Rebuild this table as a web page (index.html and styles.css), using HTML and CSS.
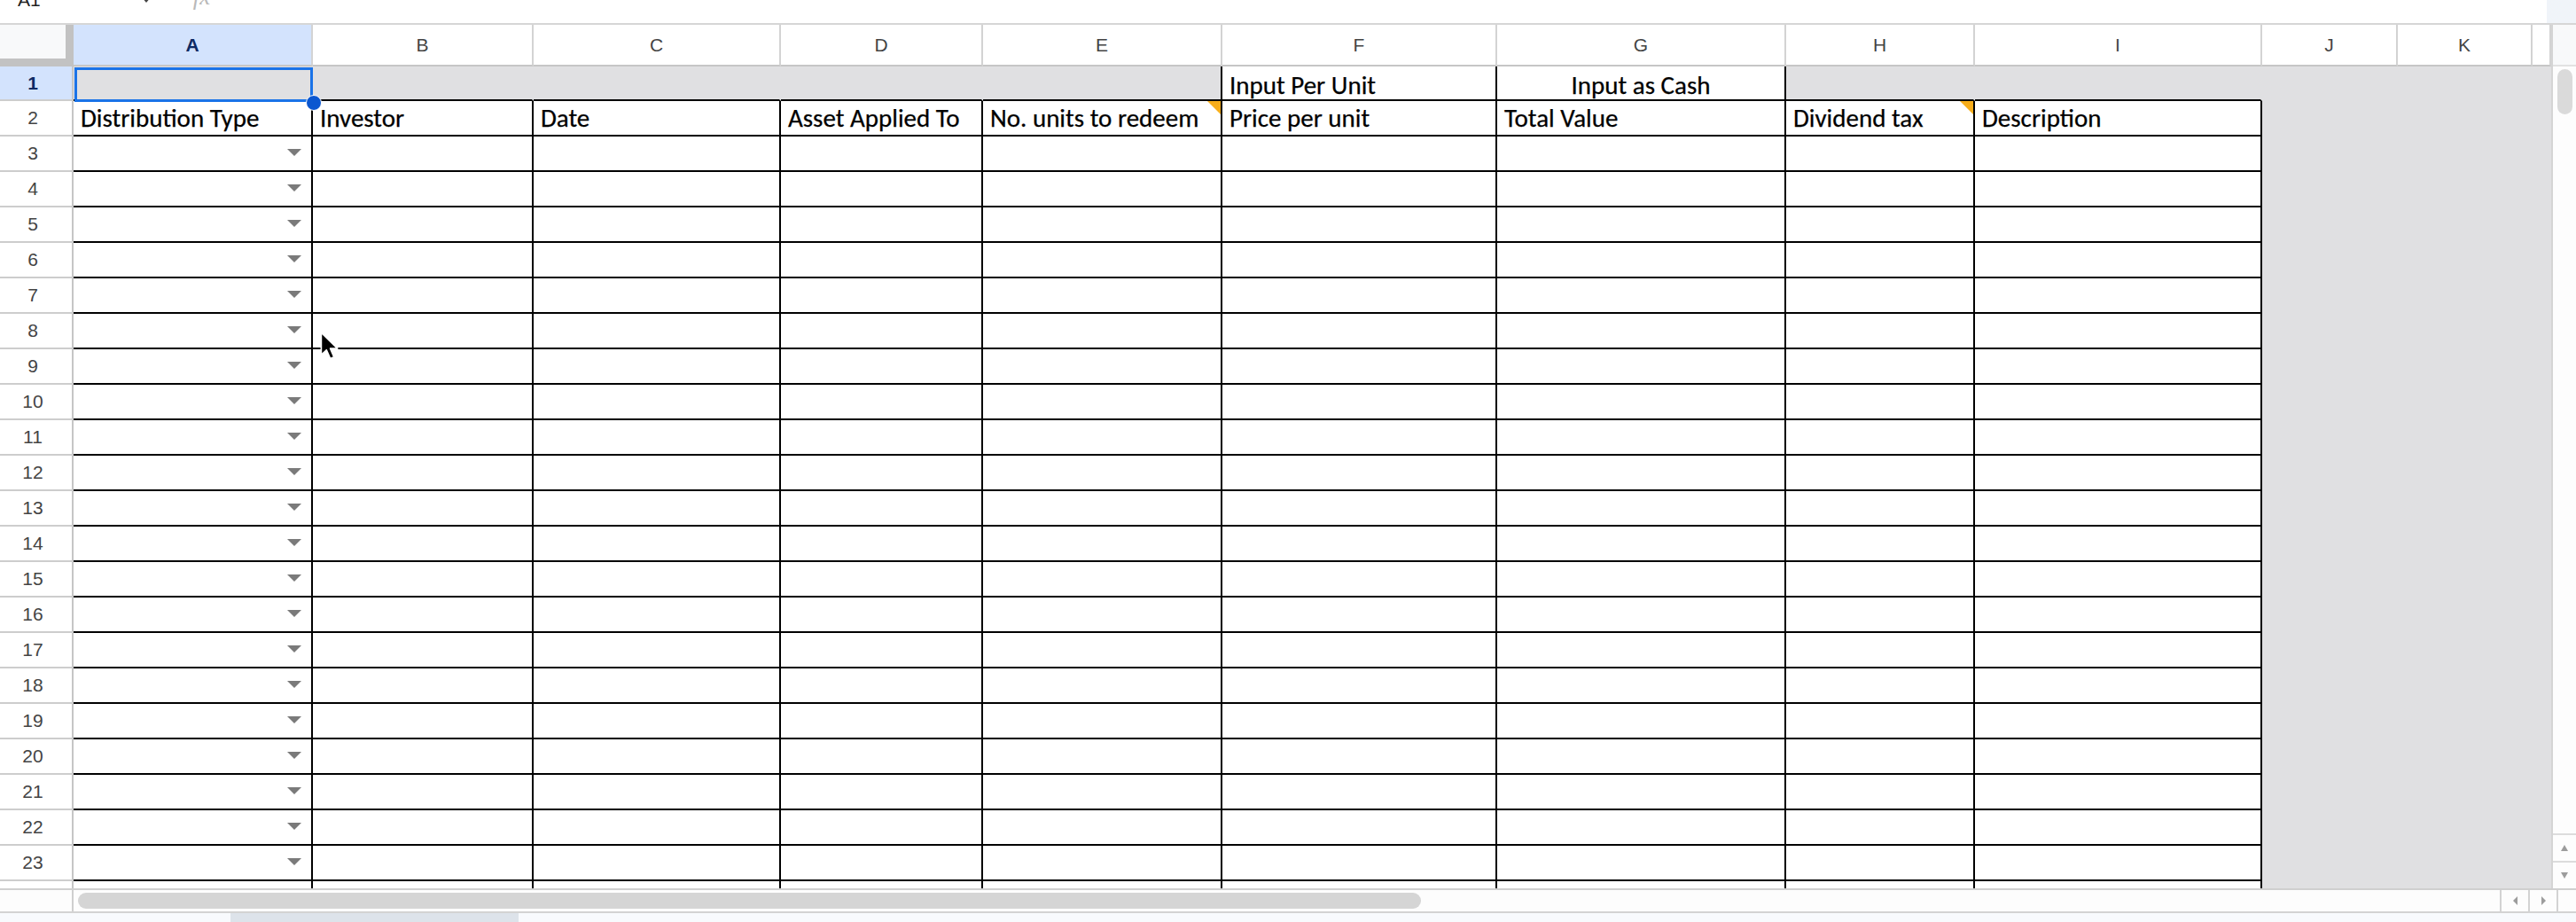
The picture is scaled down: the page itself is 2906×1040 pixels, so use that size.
FILE: index.html
```html
<!DOCTYPE html>
<html lang="en">
<head>
<meta charset="utf-8">
<title>Sheet</title>
<link rel="stylesheet" href="styles.css">
</head>
<body>
<div class="app">
  <div class="fbar">
    <span class="namebox">A1</span>
    <span class="nb-caret"></span>
    <span class="fx">fx</span>
    <span class="fbar-fill"></span>
    <span class="fbar-corner"></span>
  </div>

  <div class="main">
    <div class="grid">
      <div class="row hdr">
        <div class="corner"></div>
        <div class="ch wa sel">A</div>
        <div class="ch wb">B</div>
        <div class="ch wc">C</div>
        <div class="ch wd">D</div>
        <div class="ch we">E</div>
        <div class="ch wf">F</div>
        <div class="ch wg">G</div>
        <div class="ch wh">H</div>
        <div class="ch wi">I</div>
        <div class="ch wj">J</div>
        <div class="ch wk">K</div>
        <div class="ch wl"></div>
      </div>

      <div class="row r1">
        <div class="rh sel">1</div>
        <div class="c wa gray a1"></div>
        <div class="c wb gray"></div>
        <div class="c wc gray"></div>
        <div class="c wd gray"></div>
        <div class="c we gray vr"></div>
        <div class="c wf t t1">Input Per Unit</div>
        <div class="c wg t t1 center">Input as Cash</div>
        <div class="c wh gray"></div>
        <div class="c wi gray"></div>
        <div class="c wj out"></div>
        <div class="c wk out"></div>
        <div class="c wl out"></div>
      </div>

      <div class="row">
        <div class="rh">2</div>
        <div class="c wa t">Distribution Type</div>
        <div class="c wb t">Investor</div>
        <div class="c wc t">Date</div>
        <div class="c wd t">Asset Applied To</div>
        <div class="c we t note">No. units to redeem</div>
        <div class="c wf t">Price per unit</div>
        <div class="c wg t">Total Value</div>
        <div class="c wh t note">Dividend tax</div>
        <div class="c wi t">Description</div>
        <div class="c wj out"></div>
        <div class="c wk out"></div>
        <div class="c wl out"></div>
      </div>

      <div class="row"><div class="rh">3</div><div class="c wa dd"><i class="arrow"></i></div><div class="c wb"></div><div class="c wc"></div><div class="c wd"></div><div class="c we"></div><div class="c wf"></div><div class="c wg"></div><div class="c wh"></div><div class="c wi"></div><div class="c wj out"></div><div class="c wk out"></div><div class="c wl out"></div></div>
      <div class="row"><div class="rh">4</div><div class="c wa dd"><i class="arrow"></i></div><div class="c wb"></div><div class="c wc"></div><div class="c wd"></div><div class="c we"></div><div class="c wf"></div><div class="c wg"></div><div class="c wh"></div><div class="c wi"></div><div class="c wj out"></div><div class="c wk out"></div><div class="c wl out"></div></div>
      <div class="row"><div class="rh">5</div><div class="c wa dd"><i class="arrow"></i></div><div class="c wb"></div><div class="c wc"></div><div class="c wd"></div><div class="c we"></div><div class="c wf"></div><div class="c wg"></div><div class="c wh"></div><div class="c wi"></div><div class="c wj out"></div><div class="c wk out"></div><div class="c wl out"></div></div>
      <div class="row"><div class="rh">6</div><div class="c wa dd"><i class="arrow"></i></div><div class="c wb"></div><div class="c wc"></div><div class="c wd"></div><div class="c we"></div><div class="c wf"></div><div class="c wg"></div><div class="c wh"></div><div class="c wi"></div><div class="c wj out"></div><div class="c wk out"></div><div class="c wl out"></div></div>
      <div class="row"><div class="rh">7</div><div class="c wa dd"><i class="arrow"></i></div><div class="c wb"></div><div class="c wc"></div><div class="c wd"></div><div class="c we"></div><div class="c wf"></div><div class="c wg"></div><div class="c wh"></div><div class="c wi"></div><div class="c wj out"></div><div class="c wk out"></div><div class="c wl out"></div></div>
      <div class="row"><div class="rh">8</div><div class="c wa dd"><i class="arrow"></i></div><div class="c wb"></div><div class="c wc"></div><div class="c wd"></div><div class="c we"></div><div class="c wf"></div><div class="c wg"></div><div class="c wh"></div><div class="c wi"></div><div class="c wj out"></div><div class="c wk out"></div><div class="c wl out"></div></div>
      <div class="row"><div class="rh">9</div><div class="c wa dd"><i class="arrow"></i></div><div class="c wb"></div><div class="c wc"></div><div class="c wd"></div><div class="c we"></div><div class="c wf"></div><div class="c wg"></div><div class="c wh"></div><div class="c wi"></div><div class="c wj out"></div><div class="c wk out"></div><div class="c wl out"></div></div>
      <div class="row"><div class="rh">10</div><div class="c wa dd"><i class="arrow"></i></div><div class="c wb"></div><div class="c wc"></div><div class="c wd"></div><div class="c we"></div><div class="c wf"></div><div class="c wg"></div><div class="c wh"></div><div class="c wi"></div><div class="c wj out"></div><div class="c wk out"></div><div class="c wl out"></div></div>
      <div class="row"><div class="rh">11</div><div class="c wa dd"><i class="arrow"></i></div><div class="c wb"></div><div class="c wc"></div><div class="c wd"></div><div class="c we"></div><div class="c wf"></div><div class="c wg"></div><div class="c wh"></div><div class="c wi"></div><div class="c wj out"></div><div class="c wk out"></div><div class="c wl out"></div></div>
      <div class="row"><div class="rh">12</div><div class="c wa dd"><i class="arrow"></i></div><div class="c wb"></div><div class="c wc"></div><div class="c wd"></div><div class="c we"></div><div class="c wf"></div><div class="c wg"></div><div class="c wh"></div><div class="c wi"></div><div class="c wj out"></div><div class="c wk out"></div><div class="c wl out"></div></div>
      <div class="row"><div class="rh">13</div><div class="c wa dd"><i class="arrow"></i></div><div class="c wb"></div><div class="c wc"></div><div class="c wd"></div><div class="c we"></div><div class="c wf"></div><div class="c wg"></div><div class="c wh"></div><div class="c wi"></div><div class="c wj out"></div><div class="c wk out"></div><div class="c wl out"></div></div>
      <div class="row"><div class="rh">14</div><div class="c wa dd"><i class="arrow"></i></div><div class="c wb"></div><div class="c wc"></div><div class="c wd"></div><div class="c we"></div><div class="c wf"></div><div class="c wg"></div><div class="c wh"></div><div class="c wi"></div><div class="c wj out"></div><div class="c wk out"></div><div class="c wl out"></div></div>
      <div class="row"><div class="rh">15</div><div class="c wa dd"><i class="arrow"></i></div><div class="c wb"></div><div class="c wc"></div><div class="c wd"></div><div class="c we"></div><div class="c wf"></div><div class="c wg"></div><div class="c wh"></div><div class="c wi"></div><div class="c wj out"></div><div class="c wk out"></div><div class="c wl out"></div></div>
      <div class="row"><div class="rh">16</div><div class="c wa dd"><i class="arrow"></i></div><div class="c wb"></div><div class="c wc"></div><div class="c wd"></div><div class="c we"></div><div class="c wf"></div><div class="c wg"></div><div class="c wh"></div><div class="c wi"></div><div class="c wj out"></div><div class="c wk out"></div><div class="c wl out"></div></div>
      <div class="row"><div class="rh">17</div><div class="c wa dd"><i class="arrow"></i></div><div class="c wb"></div><div class="c wc"></div><div class="c wd"></div><div class="c we"></div><div class="c wf"></div><div class="c wg"></div><div class="c wh"></div><div class="c wi"></div><div class="c wj out"></div><div class="c wk out"></div><div class="c wl out"></div></div>
      <div class="row"><div class="rh">18</div><div class="c wa dd"><i class="arrow"></i></div><div class="c wb"></div><div class="c wc"></div><div class="c wd"></div><div class="c we"></div><div class="c wf"></div><div class="c wg"></div><div class="c wh"></div><div class="c wi"></div><div class="c wj out"></div><div class="c wk out"></div><div class="c wl out"></div></div>
      <div class="row"><div class="rh">19</div><div class="c wa dd"><i class="arrow"></i></div><div class="c wb"></div><div class="c wc"></div><div class="c wd"></div><div class="c we"></div><div class="c wf"></div><div class="c wg"></div><div class="c wh"></div><div class="c wi"></div><div class="c wj out"></div><div class="c wk out"></div><div class="c wl out"></div></div>
      <div class="row"><div class="rh">20</div><div class="c wa dd"><i class="arrow"></i></div><div class="c wb"></div><div class="c wc"></div><div class="c wd"></div><div class="c we"></div><div class="c wf"></div><div class="c wg"></div><div class="c wh"></div><div class="c wi"></div><div class="c wj out"></div><div class="c wk out"></div><div class="c wl out"></div></div>
      <div class="row"><div class="rh">21</div><div class="c wa dd"><i class="arrow"></i></div><div class="c wb"></div><div class="c wc"></div><div class="c wd"></div><div class="c we"></div><div class="c wf"></div><div class="c wg"></div><div class="c wh"></div><div class="c wi"></div><div class="c wj out"></div><div class="c wk out"></div><div class="c wl out"></div></div>
      <div class="row"><div class="rh">22</div><div class="c wa dd"><i class="arrow"></i></div><div class="c wb"></div><div class="c wc"></div><div class="c wd"></div><div class="c we"></div><div class="c wf"></div><div class="c wg"></div><div class="c wh"></div><div class="c wi"></div><div class="c wj out"></div><div class="c wk out"></div><div class="c wl out"></div></div>
      <div class="row"><div class="rh">23</div><div class="c wa dd"><i class="arrow"></i></div><div class="c wb"></div><div class="c wc"></div><div class="c wd"></div><div class="c we"></div><div class="c wf"></div><div class="c wg"></div><div class="c wh"></div><div class="c wi"></div><div class="c wj out"></div><div class="c wk out"></div><div class="c wl out"></div></div>
      <div class="row cut"><div class="rh"></div><div class="c wa"></div><div class="c wb"></div><div class="c wc"></div><div class="c wd"></div><div class="c we"></div><div class="c wf"></div><div class="c wg"></div><div class="c wh"></div><div class="c wi"></div><div class="c wj out"></div><div class="c wk out"></div><div class="c wl out"></div></div>
    </div>

    <div class="vscroll">
      <div class="vs-top"></div>
      <div class="vs-track"><div class="vs-thumb"></div></div>
      <div class="vs-btn"><i class="tri up"></i></div>
      <div class="vs-btn"><i class="tri down"></i></div>
    </div>
  </div>

  <div class="hscroll">
    <div class="hs-left"></div>
    <div class="hs-track"><div class="hs-thumb"></div></div>
    <div class="hs-btn"><i class="tri left"></i></div>
    <div class="hs-btn"><i class="tri right"></i></div>
    <div class="hs-end"></div>
  </div>

  <div class="tabs">
    <div class="tab-active"></div>
  </div>

  <svg class="cursor" width="28" height="38" viewBox="0 0 26 36" aria-hidden="true">
    <path d="M2 2 L2 26 L7.6 20.6 L11.6 29.8 L15.6 28.1 L11.7 19 L19.4 19 Z" fill="#000" stroke="#fff" stroke-width="1.6" stroke-linejoin="round"/>
  </svg>
</div>
</body>
</html>
```

FILE: styles.css
```css
* { box-sizing: border-box; }

html, body {
  margin: 0;
  padding: 0;
}

body {
  width: 2906px;
  height: 1040px;
  overflow: hidden;
  background: #fff;
  font-family: "Liberation Sans", Arial, sans-serif;
}

.app {
  position: relative;
  width: 2906px;
  height: 1040px;
  display: flex;
  flex-direction: column;
}

/* ---------- formula bar (mostly scrolled out of view) ---------- */
.fbar {
  flex: none;
  height: 28px;
  display: flex;
  align-items: flex-start;
  overflow: hidden;
  border-bottom: 2px solid #d6d6d6;
}

.namebox {
  margin-left: 20px;
  margin-top: -12px;
  font-size: 21px;
  line-height: 24px;
  color: #1f1f1f;
}

.nb-caret {
  margin-left: 114px;
  margin-top: -3px;
  width: 0;
  height: 0;
  border-left: 5px solid transparent;
  border-right: 5px solid transparent;
  border-top: 6px solid #444;
}

.fx {
  margin-left: 48px;
  margin-top: -19px;
  font-family: "Liberation Serif", serif;
  font-style: italic;
  font-size: 27px;
  line-height: 30px;
  color: #b9b9b9;
}

.fbar-fill { flex: 1; }

.fbar-corner {
  width: 33px;
  height: 26px;
  background: #f0f4f9;
}

/* ---------- main grid ---------- */
.main {
  flex: none;
  height: 974px;
  display: flex;
}

.grid {
  width: 2878px;
  display: flex;
  flex-direction: column;
  overflow: hidden;
}

.row {
  flex: none;
  display: flex;
  height: 40px;
}

.row.hdr { height: 47px; }
.row.r1 { height: 39px; }
.row.cut { height: 8px; overflow: hidden; align-items: flex-start; }
.row.cut > div { height: 40px; }

/* column widths */
.corner, .rh { width: 83px; flex: none; }
.wa { width: 270px; flex: none; }
.wb { width: 249px; flex: none; }
.wc { width: 279px; flex: none; }
.wd { width: 228px; flex: none; }
.we { width: 270px; flex: none; }
.wf { width: 310px; flex: none; }
.wg { width: 326px; flex: none; }
.wh { width: 213px; flex: none; }
.wi { width: 324px; flex: none; }
.wj { width: 153px; flex: none; }
.wk { width: 152px; flex: none; }
.wl { width: 21px; flex: none; }

/* header corner */
.corner {
  background: #f8f9fa;
  border-right: 9px solid #c2c2c2;
  border-bottom: 9px solid #c2c2c2;
}

/* column headers */
.ch {
  display: flex;
  align-items: center;
  justify-content: center;
  background: #fff;
  border-right: 2px solid #d3d3d3;
  border-bottom: 2px solid #c6c6c6;
  font-size: 21px;
  color: #444;
  padding-top: 1px;
}

.ch.sel, .rh.sel {
  background: #d3e3fd;
  color: #0e2a63;
  font-weight: bold;
}

/* row headers */
.rh {
  display: flex;
  align-items: center;
  justify-content: center;
  padding-right: 7px;
  background: #fff;
  border-right: 2px solid #c6c6c6;
  border-bottom: 2px solid #cdcdcd;
  font-size: 21px;
  color: #444;
}

/* cells */
.c {
  position: relative;
  background: #fff;
  border-right: 2px solid #000;
  border-bottom: 2px solid #000;
}

.c.gray {
  background: #e0e0e2;
  border-right-color: #e0e0e2;
}

.c.gray.vr { border-right-color: #000; }

.c.out {
  background: #e0e0e2;
  border-right-color: #e0e0e2;
  border-bottom-color: #e0e0e2;
}

.t {
  display: flex;
  align-items: flex-end;
  padding: 0 0 4px 8px;
  font-family: Carlito, Lato, "Open Sans", sans-serif;
  font-size: 29px;
  line-height: 29px;
  color: #000;
  -webkit-text-stroke: 0.25px #000;
  white-space: nowrap;
  overflow: hidden;
}

.t.t1 { padding-bottom: 1px; }
.t.center { justify-content: center; padding-left: 0; }

/* selected cell A1 */
.a1::before {
  content: "";
  position: absolute;
  left: 1px;
  top: 1px;
  right: -2px;
  bottom: -3px;
  border: 3px solid #1a73e8;
  z-index: 2;
}

.a1::after {
  content: "";
  position: absolute;
  left: 262px;
  top: 32px;
  width: 16px;
  height: 16px;
  border-radius: 50%;
  background: #0b57d0;
  border: 1.5px solid #fff;
  z-index: 3;
}

/* note indicators */
.note::after {
  content: "";
  position: absolute;
  top: 0;
  right: 0;
  width: 15px;
  height: 15px;
  background: #f7ad1b;
  clip-path: polygon(0 0, 100% 0, 100% 100%);
}

/* dropdown chips */
.dd {
  display: flex;
  align-items: center;
  justify-content: flex-end;
  padding-right: 11px;
  padding-bottom: 3px;
}

.arrow {
  width: 0;
  height: 0;
  border-left: 8px solid transparent;
  border-right: 8px solid transparent;
  border-top: 8px solid #7a7a7a;
}

/* ---------- vertical scrollbar ---------- */
.vscroll {
  width: 28px;
  flex: none;
  display: flex;
  flex-direction: column;
  border-left: 2px solid #d4d4d4;
}

.vs-top {
  height: 47px;
  background: #f8f9fa;
  border-bottom: 2px solid #e2e2e2;
}

.vs-track {
  flex: 1;
  background: #fdfdfd;
  padding: 3px 0 0 5px;
}

.vs-thumb {
  width: 17px;
  height: 51px;
  border-radius: 9px;
  background: #dadada;
}

.vs-btn {
  height: 31px;
  display: flex;
  align-items: center;
  justify-content: center;
  background: #fdfdfd;
  border-top: 2px solid #dcdcdc;
}

.tri {
  width: 0;
  height: 0;
}
.tri.up {
  border-left: 4px solid transparent;
  border-right: 4px solid transparent;
  border-bottom: 7px solid #9c9c9c;
}
.tri.down {
  border-left: 4px solid transparent;
  border-right: 4px solid transparent;
  border-top: 7px solid #9c9c9c;
}
.tri.left {
  border-top: 5px solid transparent;
  border-bottom: 5px solid transparent;
  border-right: 5px solid #9c9c9c;
}
.tri.right {
  border-top: 5px solid transparent;
  border-bottom: 5px solid transparent;
  border-left: 5px solid #9c9c9c;
}

/* ---------- horizontal scrollbar ---------- */
.hscroll {
  flex: none;
  height: 28px;
  display: flex;
  background: #fdfdfd;
  border-top: 2px solid #cfcfcf;
  border-bottom: 2px solid #d3d3d3;
}

.hs-left {
  width: 83px;
  border-right: 2px solid #cfcfcf;
}

.hs-track {
  flex: 1;
  padding: 3px 0 0 5px;
}

.hs-thumb {
  width: 1515px;
  height: 18px;
  border-radius: 9px;
  background: #d5d5d5;
}

.hs-btn {
  width: 32px;
  display: flex;
  align-items: center;
  justify-content: center;
  border-left: 2px solid #d3d3d3;
}

.hs-end {
  width: 22px;
  border-left: 2px solid #d3d3d3;
}

/* ---------- sheet tab strip (cut off) ---------- */
.tabs {
  flex: 1;
  display: flex;
  background: #f8fafd;
}

.tab-active {
  margin-left: 260px;
  width: 325px;
  background: #dde3ea;
}

/* ---------- mouse pointer ---------- */
.cursor {
  position: absolute;
  left: 360px;
  top: 373px;
}
```
